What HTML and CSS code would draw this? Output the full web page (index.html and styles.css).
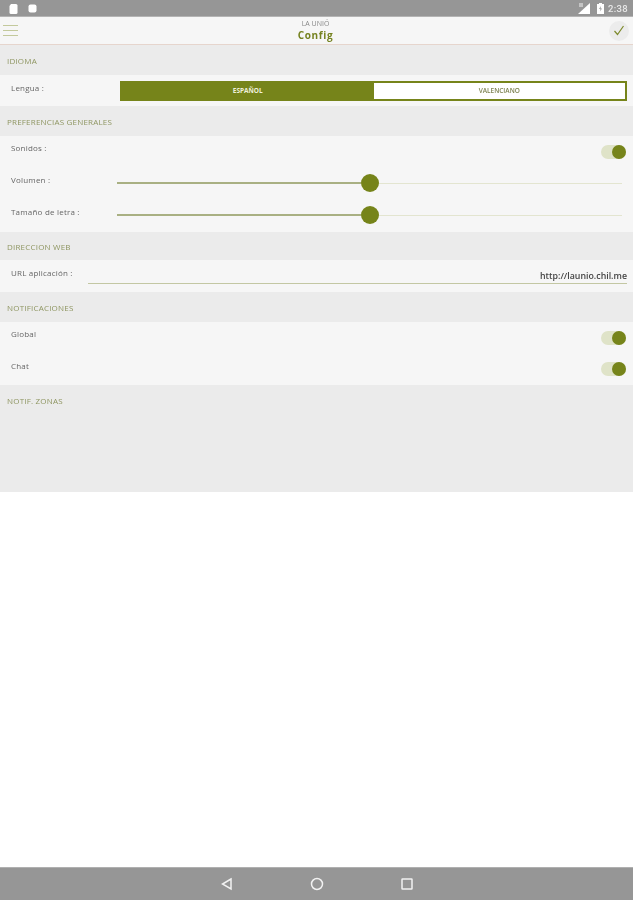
FILE: index.html
```html
<!DOCTYPE html>
<html lang="es">
<head>
    <meta charset="UTF-8">
    <meta name="viewport" content="width=device-width, initial-scale=1.0">
    <title>Config</title>
    <link rel="stylesheet" href="styles.css">
</head>
<body>
    <div class="screen">
        <div class="status-bar">
            <div class="status-left">
                <svg width="9" height="10" viewBox="0 0 9 10"><path d="M2 0h5a1.500 1.500 0 0 1 1.500 1.500v7A1.500 1.500 0 0 1 7 10H2A1.500 1.500 0 0 1 .5 8.500V2z" fill="#fff"/></svg>
                <svg width="9" height="9" viewBox="0 0 9 9"><rect x=".5" y=".5" width="8" height="8" rx="2" fill="#fff"/></svg>
            </div>
            <div class="status-right">
                <svg width="12" height="11" viewBox="0 0 12 11"><path d="M12 0v11H0z" fill="#fff"/><path d="M1 0h4v4H1z" fill="#c4c4c4"/></svg>
                <svg width="7" height="11" viewBox="0 0 7 11"><path d="M2 0h3v1h2v10H0V1h2z" fill="#fff"/><path d="M4 3 2 6h1.500L3 8.500 5 5.500H3.500z" fill="#969696"/></svg>
                <span class="clock">2:38</span>
            </div>
        </div>

        <div class="app-header">
            <div class="menu-icon"><span></span><span></span><span></span></div>
            <div class="app-title">
                <div class="app-name">LA UNIÓ</div>
                <div class="page-name">Config</div>
            </div>
            <div class="save-btn">
                <svg width="12" height="11" viewBox="0 0 12 11"><path d="M1.500 6 4.500 9.500 10.500 1" fill="none" stroke="#7d8a2c" stroke-width="1.200"/></svg>
            </div>
        </div>

        <div class="section-title"><span>IDIOMA</span></div>
        <div class="section-body lang-row">
            <div class="label">Lengua :</div>
            <div class="segment">
                <div class="segment-item active">ESPAÑOL</div>
                <div class="segment-item">VALENCIANO</div>
            </div>
        </div>

        <div class="section-title"><span>PREFERENCIAS GENERALES</span></div>
        <div class="section-body prefs">
            <div class="row">
                <div class="label">Sonidos :</div>
                <div class="toggle"><span class="knob"></span></div>
            </div>
            <div class="row">
                <div class="label">Volumen :</div>
                <div class="slider">
                    <div class="track-on"></div>
                    <div class="thumb"></div>
                    <div class="track-off"></div>
                </div>
            </div>
            <div class="row">
                <div class="label">Tamaño de letra :</div>
                <div class="slider">
                    <div class="track-on"></div>
                    <div class="thumb"></div>
                    <div class="track-off"></div>
                </div>
            </div>
        </div>

        <div class="section-title web"><span>DIRECCION WEB</span></div>
        <div class="section-body url-row">
            <div class="label">URL aplicación :</div>
            <div class="url-field">http://launio.chil.me</div>
        </div>

        <div class="section-title"><span>NOTIFICACIONES</span></div>
        <div class="section-body notif">
            <div class="row">
                <div class="label">Global</div>
                <div class="toggle"><span class="knob"></span></div>
            </div>
            <div class="row">
                <div class="label">Chat</div>
                <div class="toggle"><span class="knob"></span></div>
            </div>
        </div>

        <div class="section-title zones"><span>NOTIF. ZONAS</span></div>

        <div class="blank"></div>

        <div class="nav-bar">
            <svg width="14" height="14" viewBox="0 0 14 14"><path d="M11 2 2.500 7 11 12z" fill="none" stroke="#f2f2f2" stroke-width="1.500"/></svg>
            <svg width="14" height="14" viewBox="0 0 14 14"><circle cx="7" cy="7" r="5.500" fill="none" stroke="#f2f2f2" stroke-width="1.500"/></svg>
            <svg width="14" height="14" viewBox="0 0 14 14"><rect x="2" y="2" width="10" height="10" rx=".5" fill="none" stroke="#f2f2f2" stroke-width="1.500"/></svg>
        </div>
    </div>
</body>
</html>
```

FILE: styles.css
```css
body {
    margin: 0;
    padding: 0;
    background: white;
    font-family: "Open Sans", sans-serif;
}
.screen {
    width: 633px;
    height: 900px;
    display: flex;
    flex-direction: column;
    overflow: hidden;
}
.status-bar {
    height: 17px;
    flex: none;
    background: #969696;
    border-bottom: 1px solid #b4b4b4;
    display: flex;
    justify-content: space-between;
    align-items: center;
    padding: 1px 5px 0 9px;
    box-sizing: border-box;
}
.status-left, .status-right {
    display: flex;
    align-items: center;
}
.status-left {
    gap: 10px;
}
.status-right {
    gap: 7px;
}
.clock {
    color: #e8e8e8;
    font-size: 9.500px;
    font-weight: 500;
    font-family: "Roboto", sans-serif;
    letter-spacing: 0.3px;
    margin-left: -3px;
    filter: blur(0.4px);
}
.app-header {
    height: 27px;
    flex: none;
    background: #f6f6f6;
    border-bottom: 1px solid #e6d5cd;
    display: flex;
    align-items: center;
    justify-content: space-between;
    padding: 0 4px 0 3px;
}
.menu-icon {
    width: 15px;
    display: flex;
    flex-direction: column;
    gap: 4px;
    margin-top: -1px;
}
.menu-icon span {
    height: 1px;
    background: #c3c99c;
}
.app-title {
    text-align: center;
    margin-left: 4px;
    padding-top: 2px;
    filter: blur(0.3px);
}
.app-name {
    font-size: 7px;
    line-height: 8px;
    color: #888;
}
.page-name {
    font-size: 10px;
    line-height: 15px;
    font-weight: 700;
    color: #75821f;
    letter-spacing: 0.6px;
}
.save-btn {
    width: 20px;
    height: 20px;
    border-radius: 50%;
    background: #ececec;
    display: flex;
    align-items: center;
    justify-content: center;
}
.section-title {
    height: 30px;
    flex: none;
    background: #ebebeb;
    color: #8f9662;
    font-size: 8px;
    line-height: 32px;
    padding-left: 7px;
    letter-spacing: 0.2px;
}
.section-title span {
    display: inline-block;
    filter: blur(0.4px);
}
.section-title.web {
    height: 28px;
    line-height: 30px;
}
.section-title.zones {
    height: 107px;
}
.section-body {
    background: #f6f6f6;
    flex: none;
}
.label {
    font-size: 8px;
    color: #666;
    letter-spacing: 0.2px;
    flex: none;
    margin-top: -8px;
    filter: blur(0.4px);
}
.lang-row {
    height: 31px;
    display: flex;
    align-items: center;
    padding: 0 6px 0 11px;
}
.lang-row .label {
    width: 109px;
    margin-top: -7px;
}
.segment {
    flex: 1;
    height: 16px;
    border: 2px solid #76841a;
    display: flex;
    background: white;
}
.segment-item {
    flex: 1;
    text-align: center;
    font-size: 6.500px;
    line-height: 16px;
    font-weight: 600;
    color: #7d8250;
    filter: blur(0.4px);
}
.segment-item.active {
    background: #76841a;
    color: #eef0dd;
    font-weight: 700;
    filter: none;
}
.prefs {
    height: 96px;
}
.notif {
    height: 63px;
}
.row {
    height: 32px;
    display: flex;
    align-items: center;
    justify-content: space-between;
    padding: 0 7px 0 11px;
}
.row:first-child {
    height: 31px;
}
.toggle {
    width: 25px;
    height: 14px;
    border-radius: 7px;
    background: #dfe3c8;
    display: flex;
    align-items: center;
    justify-content: flex-end;
}
.knob {
    width: 14px;
    height: 14px;
    border-radius: 50%;
    background: #76841a;
}
.slider {
    width: 505px;
    margin-right: 4px;
    height: 18px;
    display: flex;
    align-items: center;
}
.track-on {
    width: 244px;
    height: 2px;
    background: #a9b083;
}
.track-off {
    flex: 1;
    height: 1px;
    background: #e3e5d0;
}
.thumb {
    width: 18px;
    height: 18px;
    border-radius: 50%;
    background: #76841a;
    flex: none;
}
.url-row {
    height: 32px;
    display: flex;
    align-items: flex-start;
    padding: 0 6px 0 11px;
}
.url-row .label {
    width: 77px;
    margin-top: 7px;
}
.url-field {
    flex: 1;
    height: 23px;
    line-height: 33px;
    border-bottom: 1px solid #c3c7a3;
    text-align: right;
    font-size: 8.800px;
    font-weight: 600;
    color: #444;
    filter: blur(0.3px);
}
.blank {
    flex: 1;
    background: white;
}
.nav-bar {
    height: 32px;
    flex: none;
    background: #969696;
    border-top: 1px solid #b0b0b0;
    display: flex;
    justify-content: center;
    align-items: center;
    gap: 76px;
}
```
